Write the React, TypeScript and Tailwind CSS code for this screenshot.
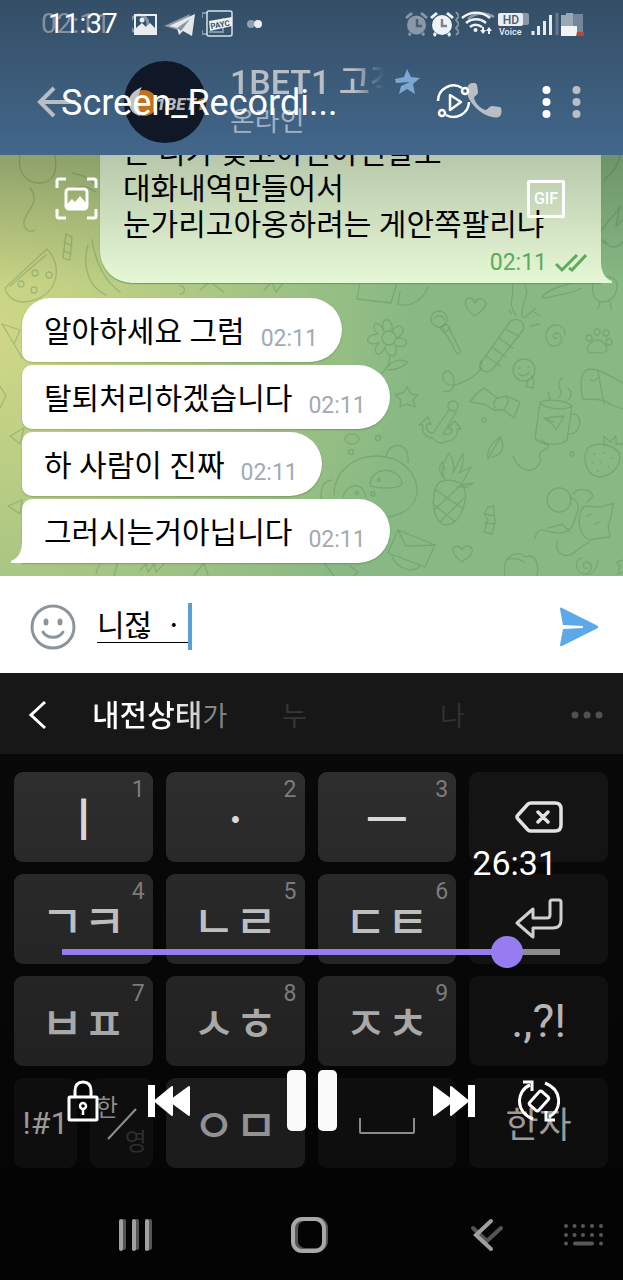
import { useState } from "react";
import type { ReactNode } from "react";
import clsx from "clsx";

type KeyDef = { label: ReactNode; name: string; hint?: string; dim?: boolean };

const messages = ["알아하세요 그럼", "탈퇴처리하겠습니다", "하 사람이 진짜", "그러시는거아닙니다"];

function Dots({ className }: { className: string }) {
    return (
        <svg width="9" height="32" viewBox="0 0 9 32" className={className} fill="currentColor">
            <circle cx="4.500" cy="4" r="4" />
            <circle cx="4.500" cy="16" r="4" />
            <circle cx="4.500" cy="28" r="4" />
        </svg>
    );
}

function Alarms() {
    return (
        <svg width="56" height="28" viewBox="403 9 56 28">
            <g fill="#8a97a4">
                <circle cx="416.500" cy="24" r="9.500" />
                <path d="M405 16l6-5 2 2-6 5zM428 16l-6-5-2 2 6 5zM409 31l3 2-2 2-2-1zM424 31l-3 2 2 2 2-1z" />
            </g>
            <path d="M417 18v7h5" stroke="#4b5f73" strokeWidth="2.500" fill="none" />
            <path d="M456 11l3 4-3 4 3 4-3 4 3 4-3 3" stroke="#8494a3" strokeWidth="2" fill="none" />
            <g fill="#eef2f5">
                <circle cx="442" cy="24" r="10" />
                <path d="M430 16l6-5 2 2-6 5zM454 16l-6-5-2 2 6 5zM434 31l3 2-2 3-2-2zM450 31l-3 2 2 3 2-2z" />
            </g>
            <path d="M442 18v7h5" stroke="#7d868e" strokeWidth="2.500" fill="none" />
        </svg>
    );
}

function StatusBar() {
    return (
        <div className="relative flex h-12 items-center justify-between pl-12 pr-[38px]">
            <span className="absolute left-[41px] text-[28px] leading-12 text-[#94a2af] opacity-80">02:11</span>
            <span className="relative text-[28px] leading-12 text-white">11:37</span>
            <div className="ml-[14px] mr-auto flex items-center gap-[5px]">
                <svg width="26" height="26" viewBox="131 10 26 26">
                    <circle cx="138" cy="23" r="9" fill="none" stroke="#8796a4" strokeWidth="3" />
                    <path d="M134 14h21v19h-21z" fill="none" stroke="#e8edf0" strokeWidth="2" />
                    <path d="M135 32v-5l6-5 4 4 4-4 6 6v4z" fill="#e8edf0" />
                    <circle cx="141" cy="19" r="2.500" fill="#e8edf0" />
                </svg>
                <svg width="34" height="26" viewBox="162 10 34 26">
                    <path d="M163 25l26-12-4 17-8-1z" fill="#8b98a5" />
                    <path d="M168 25l26-12-3 22-9-5-4 4-2-7z" fill="#e4e8eb" />
                    <path d="M176 27l13-9-9 12z" fill="#8896a4" />
                </svg>
                <svg width="32" height="28" viewBox="201 9 32 28">
                    <path d="M201 17v-5h5M201 29v4h5" fill="none" stroke="#8495a4" strokeWidth="2" />
                    <path d="M222 17v14h-14" fill="none" stroke="#8495a4" strokeWidth="2" />
                    <rect x="206" y="10" width="25" height="25" rx="2" fill="none" stroke="#d9e1e8" strokeWidth="1.500" />
                    <path d="M208 20l23-4v9l-22 5z" fill="#eef2f5" />
                    <text x="210" y="28" fontSize="8" fontWeight="700" fill="#3c566f" transform="rotate(-10 210 28)">PAYC</text>
                </svg>
                <svg width="24" height="12" viewBox="-6 0 24 12">
                    <circle cx="6" cy="6" r="4" fill="#8fa0ae" />
                    <circle cx="13" cy="6" r="4" fill="#e8edf0" />
                </svg>
            </div>
            <div className="flex items-center gap-[2px]">
                <Alarms />
                <svg width="34" height="28" viewBox="461 9 34 28" fill="none" stroke="#eef2f5" strokeWidth="2.500">
                    <path d="M468 18c8-7 18-7 26-2" stroke="#8b9bab" />
                    <path d="M462 17c8-7 20-7 28 0M466 22c6-5 14-5 20 0M470 26c3-3 8-3 12 0" />
                    <circle cx="475.500" cy="29" r="2" fill="#eef2f5" stroke="none" />
                    <path d="M483 26v6M489 33v-6" strokeWidth="2" />
                    <path d="M480 29l3 4 3-4zM486 30l3-4 3 4z" fill="#eef2f5" stroke="none" />
                </svg>
                <svg width="32" height="28" viewBox="498 9 32 28">
                    <rect x="506" y="12" width="24" height="12" rx="2" fill="#8b98a5" />
                    <rect x="499" y="12" width="25" height="13" rx="2" fill="#e9edf0" />
                    <text x="512" y="23" textAnchor="middle" fontSize="12" fontWeight="500" fill="#4a5c6d">HD</text>
                    <text x="500" y="34" fontSize="9" fontWeight="500" fill="#e9edf0">Voice</text>
                </svg>
                <svg width="28" height="28" viewBox="531 9 28 28" strokeWidth="3" stroke="#e6ebef">
                    <path d="M533 34v-4M538.500 34v-9M544.500 34v-14M550.500 34v-20" />
                    <path d="M557 34v-22" stroke="#64798d" />
                </svg>
                <svg width="24" height="28" viewBox="560 9 24 28">
                    <path d="M560 14h5v-2h7v2h4v11h-16z" fill="#9aa8b5" />
                    <path d="M572 13h10v18h-10z" fill="#73869a" />
                    <path d="M560 25h16v10h-16z" fill="#f1f3f5" />
                    <path d="M576 31h7v4h-8z" fill="#b24a40" />
                </svg>
            </div>
        </div>
    );
}

function ChatHeader() {
    return (
        <header className="bg-linear-to-b from-[#344e66] to-[#42678b]">
            <StatusBar />
            <div className="flex h-[107px] items-center pl-[37px] pr-[42px] text-[#b9bec4]">
                <button aria-label="Back">
                    <svg width="40" height="32" viewBox="0 0 40 32" fill="none" stroke="currentColor" strokeWidth="4">
                        <path d="M17 2L3 16l14 14M3 16h36" />
                    </svg>
                </button>
                <svg width="82" height="82" viewBox="124 61 82 82" className="ml-[47px] shrink-0">
                    <circle cx="165" cy="102" r="41" fill="#101828" />
                    <circle cx="144" cy="103" r="13" fill="#c4731b" />
                    <path d="M142 87c-9 4-14 9-13 17 1 7 5 10 11 12 0-10-5-17 2-29z" fill="#bfc2c6" />
                    <text x="156" y="110" fontSize="17" fontWeight="900" fontStyle="italic" fill="#b5b8bd">
                        1BET<tspan fill="#c4731b">1</tspan>
                    </text>
                </svg>
                <div className="ml-6 min-w-0 flex-1">
                    <div className="flex items-center gap-[10px]">
                        <h1 className="w-[154px] overflow-hidden whitespace-nowrap text-[34px] leading-10 font-medium mask-r-from-80% mask-r-to-100%">
                            1BET1 고객
                        </h1>
                        <svg width="26" height="26" viewBox="0 0 26 26" fill="#7da7d0">
                            <path d="M13 0l4 8 9 1-7 6 2 10-8-5-8 5 2-8 9-4-14 1-1-4 9-2z" />
                        </svg>
                    </div>
                    <p className="text-[27px] leading-10 text-[#9fb2c4]">온라인</p>
                </div>
                <button aria-label="Call">
                    <svg width="38" height="38" viewBox="2 2 38 38" fill="currentColor">
                        <path d="M3 5c2-4 8-4 9-1l1 7c0 3-4 4-4 6 1 5 6 10 11 12 3 0 4-4 7-4l8 1c2 1 2 7 0 9-3 3-9 1-14-1C10 29-2 14 3 5z" />
                    </svg>
                </button>
                <button aria-label="More" className="ml-[67px]">
                    <Dots className="block" />
                </button>
            </div>
        </header>
    );
}

// Line-art wallpaper behind the messages
function Doodles() {
    return (
        <svg
            className="absolute inset-0 size-full"
            viewBox="0 155 623 421"
            preserveAspectRatio="xMidYMid slice"
            fill="none"
            stroke="#4d7d4a"
            strokeOpacity="0.300"
            strokeWidth="1.300"
            strokeLinecap="round"
            strokeLinejoin="round"
        >
            {/* watermelon, candy, carrot, balloon on the left */}
            <path d="M5 288L47 249c18 18 10 52-24 53-8 0-16-5-18-14zM10 286l36-31" />
            <circle cx="21" cy="284" r="3" />
            <circle cx="34" cy="290" r="3" />
            <circle cx="49" cy="275" r="3" />
            <circle cx="35" cy="273" r="3" />
            <path d="M66 234l6 3-2 23-7-2zM64 242l8 4M63 250l8 4M20 155c-3 20 8 28 20 28s18-10 15-28M30 188c10 12 0 20-5 30-4 10 4 16 10 12M88 245c-6 20 0 42 18 50M92 240c4 24 12 40 28 52" />
            <path d="M2 324l18 6-6 14zM14 344l8 14M0 386l6 10-6 12M10 436l14-8-4 16zM8 506l14-6-2 14z" />
            <path d="M72 173c8 2 20 4 24 14M70 190c10-6 18-4 26 2" />
            <path d="M96 574c2-14 14-18 22-12l-4 14M140 570l6-6 2 8 6-8 2 8 8-8M194 575l10-12 4 12M264 290l8-8 4 10 8-10M180 286c6 0 6 8 0 8M200 290l10-8 14 10" />
            {/* right of the top bubble */}
            <path d="M604 180c10-8 16-16 16-26M600 234c6-14 14-16 20-28l-4 20 7-6M604 240c6 10 14 8 19 2M606 226c-8 4-8 14 0 18M593 284c4-10 22-10 24 0 1 10-6 18-14 18s-12-8-10-18zM600 302l-2 7M610 302l1 7" />
            {/* envelope and top doodles */}
            <path d="M360 283l-3 16 34 4 6-20M398 304c12 4 26-4 30-18M398 304l2-12M512 283c4 12-6 20 4 32M524 283c8 12-4 18-2 34M542 297c10-12 34-14 38-14M546 298c10-4 20-2 36-10M542 297l4 1" />
            <path d="M475 316c-12-9-11-17-6-18 5 0 5 4 6 5 1-4 6-6 10-2 4 6-6 11-10 15z" />
            <circle cx="439" cy="319" r="8" />
            <path d="M434 319c4-6 10-3 10 1M443 328l14 26 4-2-13-26M440 328l6-4 4 4-6 5z" />
            {/* flower */}
            <circle cx="389" cy="338" r="7" />
            <path d="M384 331c-6-14 10-16 8 0 8-12 18 0 5 7 16 0 10 13-2 7 6 12-8 16-10 2-4 13-16 6-6-4-15 4-15-9-1-9-10-8 0-17 6-3zM390 356c0 10-6 16-14 22M388 366c8-8 16-6 20-4-6 6-12 8-20 8" />
            {/* candle */}
            <path d="M480 364l30-42c6-6 16 0 13 8l-31 40c-6 4-14 0-12-6zM486 356l14 10M492 347l14 10M499 338l14 10M506 329l14 8M511 314l-2-4M524 318l12-10M530 326l10-2M534 312l6 4" />
            <path d="M557 338c-3 2-6-4-1-5 7 0 8 10 0 13-12 2-14-18-2-21 6-1 12 4 11 10" />
            <path d="M592 342c5-5 12 0 14 4 4 8-6 8-10 6-8 4-12-4-4-10z" />
            <circle cx="589" cy="338" r="3" />
            <circle cx="597" cy="332" r="3" />
            <circle cx="606" cy="333" r="3" />
            <circle cx="609" cy="342" r="3" />
            <path d="M444 391c14 4 12-20 3-20-8 2-4 16 8 14 14-4 30-14 26-24" />
            <circle cx="524" cy="370" r="11" />
            <path d="M519 368h1M528 367h1M519 374c4 3 8 2 10-2M528 380l-2 6 7 2 1-7-3-5M583 399c-4-16-2-30 8-30 10 0 24 10 32 14M583 399c12 0 22 0 28 6l12 4M590 380c4 2 6 0 8-2M598 372l6 32" />
            {/* star, anchor, bow */}
            <path d="M407 387l4 7 7 1-5 5 2 7-8-3-7 3 1-7-6-5 8-2z" />
            <circle cx="453" cy="406" r="5" />
            <path d="M449 410l-16 23c-5 0-8-4-6-9l4 0-3-7-9 8 4 0c-2 8 4 13 10 13 4 6 10 6 14 3 8 0 12-8 10-12l4 0-6-8-7 7 4 1c0 5-4 6-9 5l13-22" />
            <path d="M484 388l13 10 10-2 13 6-6 16-10-8-10 0-10-6-14-2 6-8zM497 398c-4 4-4 8-1 10M507 398c2 4 0 8-3 11" />
            {/* mug */}
            <path d="M540 403l-5 35c6 8 26 8 32 2l5-34c-6-6-26-8-32-3zM540 403c6 6 26 8 32 3M571 414c14-2 10 22-3 20M544 418l20-2-8 14-4-6zM544 418l10 4M550 400l-2-8M558 398c10-8-6-10 4-20M568 400c4-4 4-8 0-12" />
            <circle cx="484" cy="420" r="2" />
            <circle cx="572" cy="454" r="2" />
            <path d="M488 459c-2-10 6-18 12-22 6 10 2 18-8 20M488 459l10-18M497 443l4-6" />
            {/* strawberry */}
            <path d="M589 447c10-6 24-2 30 6 4 12-8 24-20 24-14-2-18-22-10-30zM604 446l0-10 6 6 6-6 0 8 7 0M594 454h1M603 453h1M611 458h1M592 463h1M600 462h1M608 467h1M597 471h1" />
            {/* panda */}
            <path d="M334 495c0-24 20-39 42-39 26 0 42 18 41 36-2 16-14 22-28 25M386 456c4-16 24-14 22 6M332 480c-14 2-12 18-8 24M373 476c8-10 28-6 29 8-4 6-24 4-31 2-2-2 0-8 2-10zM343 497c4-14 20-16 23 0" />
            <circle cx="379" cy="480" r="1.500" />
            <circle cx="357" cy="493" r="1.500" />
            <circle cx="373" cy="494" r="2" />
            <ellipse cx="352" cy="439" rx="7" ry="5" />
            <circle cx="378" cy="438" r="2.500" />
            <circle cx="351" cy="452" r="2.500" />
            {/* pineapple */}
            <path d="M443 481c-12 0-14 40 2 44 16 0 24-26 19-38-4-6-14-8-21-6zM436 490l26 18M432 503l22 18M462 484l-28 26M464 498l-24 24M445 481c-6-14 0-20 4-28 4 6 6 14 4 18M453 473l10-20c0 10 0 14-4 20l12-6-10 18 12-2-6 4-10 0M445 470l-3-8c-4 6-2 12 2 16" />
            <path d="M488 507l6-1 0 6 1 10-3 12-8-2 4-12-4-6zM486 514l8 2M485 523l10 1" />
            {/* cat */}
            <path d="M541 460c-8-14 20-8 0-20 M541 460c-6 16-22 12-28-4 -4-4 M521 486c0-8-12-14-12-28 2-8 14-8 32-5M510 458c0 8 6 20 12 26-8 12-8 28 0 38 14 14 36 24 54 20M541 476c6-6 6-10 18-6 6 0 0 8-6 8M520 500c-4 18 6 30 18 28M522 502l18 10M540 510c8 8 0 12-6 6" />
            <circle cx="559" cy="500" r="12" />
            <path d="M571 498c10 4 8 12 4 20-2 10-8 18-24 14-10-4-14-2-16 6M573 494c6-8 18-4 20 2l-6 6M584 506c-8 10-6 30 6 34l10-2 10-1-2-12c6-10 2-14 6-22l-14 4zM586 516l6-2M594 524l6-2M557 542c-2 16 14 16 20 8l12-8M548 528l14-4 8 8" />
            {/* bottom row */}
            <path d="M398 530l37 15-10 22-37-14zM398 530l8 16 29-1M392 556c4 12 20 18 28 10M462 562c-12-9-10-15-5-16 3 0 4 3 5 4 2-5 8-5 10-1 2 6-6 9-10 13zM505 575c-4-20 14-26 20-18 12-4 14 10 12 18M506 560c6-2 12-2 18 2M588 568c-4 2-8-4-2-6 6 0 8 8 0 12-12 0-12-16-4-16M598 560c0 6-4 14-10 14M623 560l-7 2 4 4-2 8 5-2M322 560l12 16M350 566l8 6-4 4" />
        </svg>
    );
}

function Chat() {
    return (
        <main className="relative overflow-hidden bg-[#88b984] bg-[radial-gradient(ellipse_410px_430px_at_0px_180px,#cfd787_0%,#c2d184_20%,#9ec283_70%,#88b984_100%)] pb-[13px]">
            <Doodles />
            <div className="relative -mt-5 ml-[100px] mr-[22px] rounded-bl-[32px] bg-[#e6f9d6] pl-[23px] pr-[14px] shadow-[0_1px_1px_#6b9a64]">
                <p className="text-[30px] leading-9 text-black">
                    는 니가 늦고아닌아닌말로
                    <br />
                    대화내역만들어서
                    <br />
                    <span className="whitespace-nowrap">눈가리고아옹하려는 게안쪽팔리냐</span>
                </p>
                <div className="flex h-10 items-center justify-end gap-2 text-[23px] text-[#61b061]">
                    <time>02:11</time>
                    <svg width="32" height="20" viewBox="0 0 32 20" fill="none" stroke="currentColor" strokeWidth="3">
                        <path d="M1 11l6 6L22 2M14 15l3 2L31 2" />
                    </svg>
                </div>
                <svg width="12" height="22" viewBox="0 0 12 22" className="absolute -right-[11px] bottom-0" fill="#e6f9d6">
                    <path d="M0 0h1c0 10 3 17 11 20v2H0z" />
                </svg>
            </div>
            <div className="absolute inset-x-0 top-0 h-[130px] bg-linear-to-b from-black/20 to-transparent" />
            <ul className="relative mt-[15px] flex flex-col items-start gap-[3px] pl-[22px]">
                {messages.map((text, i) => {
                    const last = i === messages.length - 1;
                    return (
                        <li
                            key={text}
                            className={clsx(
                                "relative flex h-16 items-center gap-4 rounded-r-[32px] bg-white pl-[22px] pr-6 shadow-[0_1px_2px_#0003]",
                                i === 0 ? "rounded-tl-[28px]" : "rounded-tl-[10px]",
                                !last && "rounded-bl-[10px]"
                            )}
                        >
                            <span className="pt-[3px] text-[30px] leading-9 text-black">{text}</span>
                            <time className="pt-[18px] text-[23px] leading-8 text-[#a1aab3]">02:11</time>
                            {last && (
                                <svg width="12" height="22" viewBox="0 0 12 22" className="absolute -left-[11px] bottom-0" fill="#fff">
                                    <path d="M12 0h-1c0 10-3 17-11 20v2h12z" />
                                </svg>
                            )}
                        </li>
                    );
                })}
            </ul>
        </main>
    );
}

function Composer() {
    const [draft, setDraft] = useState("니젆 ㆍ");
    return (
        <form className="flex h-[97px] items-center bg-white pt-1 pl-[30px] pr-6" onSubmit={(e) => e.preventDefault()}>
            <button type="button" aria-label="Emoji">
                <svg width="46" height="46" viewBox="0 0 46 46" fill="none" stroke="#8c959b" strokeWidth="3">
                    <circle cx="23" cy="23" r="21" />
                    <path d="M13 28c4 7 16 7 20 0" strokeLinecap="round" />
                    <g fill="#8c959b" stroke="none">
                        <ellipse cx="16" cy="18" rx="2.500" ry="3.500" />
                        <ellipse cx="30" cy="18" rx="2.500" ry="3.500" />
                    </g>
                </svg>
            </button>
            <input
                aria-label="Message"
                value={draft}
                onChange={(e) => setDraft(e.target.value)}
                className="ml-[21px] h-8 w-[91px] border-b border-black text-[30px] leading-8 text-black outline-none"
            />
            <span className="h-[47px] w-1 bg-[#5a9fd6]" />
            <button type="submit" aria-label="Send" className="ml-auto">
                <svg width="40" height="40" viewBox="0 0 40 40" fill="#5ba9e8">
                    <path d="M1 2c0-1 1-2 2-1l36 18v2L3 39c-1 0-2 0-2-1l3-16 20-1v-2L4 18z" />
                </svg>
            </button>
        </form>
    );
}

function Suggestions() {
    return (
        <div className="flex h-[81px] items-center bg-[#171717] pt-[2px] pl-7 pr-5">
            <button aria-label="Back" className="text-white">
                <svg width="20" height="30" viewBox="0 0 20 30" fill="none" stroke="currentColor" strokeWidth="3">
                    <path d="M17 2L3 15l14 13" />
                </svg>
            </button>
            <div className="ml-11 grid flex-1 grid-cols-[190px_158px_1fr] items-center pt-1 text-[27px] leading-10">
                <button className="text-left text-[#858585]">
                    <span className="bg-linear-to-r from-white from-70% to-[#c4c4c4] bg-clip-text text-[30px] font-medium text-transparent">내전상태</span>가
                </button>
                <button className="text-left text-[#363636]">누</button>
                <button className="text-left text-[#303030]">나</button>
            </div>
            <button aria-label="More suggestions">
                <svg width="32" height="8" viewBox="0 0 32 8" fill="#505050">
                    <circle cx="4" cy="4" r="3.500" />
                    <circle cx="16" cy="4" r="3.500" />
                    <circle cx="28" cy="4" r="3.500" />
                </svg>
            </button>
        </div>
    );
}

const backspace = (
    <svg width="48" height="32" viewBox="0 0 48 32" fill="none" stroke="currentColor" strokeWidth="3.500" strokeLinejoin="round" strokeLinecap="round">
        <path d="M16 2h24q6 0 6 6v16q0 6-6 6H16q-2 0-3-1L3 18q-2-2 0-4L13 3q1-1 3-1zM23 11l10 10M33 11L23 21" />
    </svg>
);

const enter = (
    <svg width="48" height="42" viewBox="0 0 48 42" fill="none" stroke="currentColor" strokeWidth="3" strokeLinejoin="round">
        <path d="M2 25L18 11v9h14q3 0 3-3V4q0-2 2-2h7q2 0 2 2v18q0 8-8 8H18v9z" />
    </svg>
);

const spaceBar = (
    <svg width="56" height="16" viewBox="0 0 56 16" fill="none" stroke="currentColor" strokeWidth="2">
        <path d="M1 0v14q0 1 1 1h52q1 0 1-1V0" />
    </svg>
);

const rows: { keyTone: string; dimTone: string; keys: KeyDef[] }[] = [
    {
        keyTone: "bg-linear-to-b from-[#2e2e2e] to-[#292929] text-[#d8d8d8]",
        dimTone: "bg-[#141414] text-[#e2e2e2]",
        keys: [
            { label: "ㅣ", name: "i", hint: "1" },
            { label: "ㆍ", name: "dot", hint: "2" },
            { label: "ㅡ", name: "eu", hint: "3" },
            { label: backspace, name: "Backspace", dim: true },
        ],
    },
    {
        keyTone: "bg-linear-to-b from-[#292929] to-[#252525] text-[#bebebe]",
        dimTone: "bg-[#121212] text-[#cfcfcf]",
        keys: [
            { label: "ㄱㅋ", name: "giyeok", hint: "4" },
            { label: "ㄴㄹ", name: "nieun", hint: "5" },
            { label: "ㄷㅌ", name: "digeut", hint: "6" },
            { label: enter, name: "Enter", dim: true },
        ],
    },
    {
        keyTone: "bg-linear-to-b from-[#252525] to-[#212121] text-[#a8a8a8]",
        dimTone: "bg-[#101010] text-[#b5b5b5]",
        keys: [
            { label: "ㅂㅍ", name: "bieup", hint: "7" },
            { label: "ㅅㅎ", name: "siot", hint: "8" },
            { label: "ㅈㅊ", name: "jieut", hint: "9" },
            { label: ".,?!", name: "Punctuation", dim: true },
        ],
    },
];

function Keyboard() {
    return (
        <section className="grid grid-cols-4 gap-x-[13px] gap-y-3 bg-linear-to-b from-[#090909] to-[#050505] pt-[18px] pl-[14px] pr-[15px]">
            {rows.map((row) =>
                row.keys.map((k) => (
                    <button
                        key={k.name}
                        aria-label={k.name}
                        className={clsx(
                            "relative flex h-[90px] items-center justify-center rounded-[9px] text-[46px]",
                            k.dim ? row.dimTone : [row.keyTone, "pt-[6px] font-medium"]
                        )}
                    >
                        {k.label}
                        {k.hint && <span className="absolute top-1 right-2 text-[23px] leading-7 font-normal text-[#7c7c7c]">{k.hint}</span>}
                    </button>
                ))
            )}
            <div className="grid grid-cols-2 gap-x-[13px]">
                <button className="h-[90px] rounded-[9px] bg-[#0e0e0e] text-[32px] text-[#9a9a9a]">!#1</button>
                <button className="relative h-[90px] rounded-[9px] bg-[#0e0e0e] text-2xl text-[#8a8a8a]">
                    <span className="absolute top-[14px] left-[6px] leading-8">한</span>
                    <svg width="30" height="32" viewBox="0 0 30 32" className="absolute top-[30px] left-[17px]" stroke="#8f8f8f" strokeWidth="2">
                        <path d="M1 31L29 1" />
                    </svg>
                    <span className="absolute right-[6px] bottom-[10px] leading-8 text-[#2e2e2e]">영</span>
                </button>
            </div>
            <button className="h-[90px] rounded-[9px] bg-[#1c1c1c] pt-[6px] text-[46px] font-medium text-[#929292]">ㅇㅁ</button>
            <button aria-label="Space" className="flex h-[90px] items-center justify-center rounded-[9px] bg-[#0e0e0e] pt-[6px] text-[#8a8a8a]">
                {spaceBar}
            </button>
            <button className="h-[90px] rounded-[9px] bg-[#0e0e0e] pt-[6px] text-[36px] text-[#9a9a9a]">한자</button>
        </section>
    );
}

function NavBar() {
    return (
        <nav className="flex h-28 items-center justify-between bg-[#040404] pt-[22px] pl-[118px] pr-5">
            <div className="flex items-center gap-[138px]">
                <button aria-label="Recents">
                    <svg width="35" height="34" viewBox="0 0 35 34" strokeWidth="4" strokeLinecap="round">
                        <path d="M6 3v27M19 3v27M32 3v27" stroke="#555" />
                        <path d="M3 3v28M16 3v28M29 3v28" stroke="#a0a0a0" />
                    </svg>
                </button>
                <button aria-label="Home">
                    <svg width="38" height="36" viewBox="0 0 38 36" fill="none" strokeWidth="4">
                        <rect x="5" y="2" width="30" height="31" rx="9" stroke="#555" />
                        <rect x="2" y="2" width="31" height="32" rx="9" stroke="#a8a8a8" />
                    </svg>
                </button>
            </div>
            <div className="flex items-center gap-[60px]">
                <button aria-label="Back">
                    <svg width="34" height="34" viewBox="0 0 34 34" fill="none" strokeWidth="4" strokeLinecap="round">
                        <path d="M3 10l14 13L31 10" stroke="#555" />
                        <path d="M21 3L6 17l15 14" stroke="#a0a0a0" />
                    </svg>
                </button>
                <button aria-label="Hide keyboard">
                    <svg width="39" height="22" viewBox="0 0 39 22" stroke="#585858" strokeWidth="4" strokeLinecap="round">
                        <path d="M2 2h0M10.500 2h0M19 2h0M28 2h0M37 2h0M2 11h0M10.500 11h0M19 11h0M28 11h0M37 11h0M2 19.500h0M11 19.500h17M37 19.500h0" />
                    </svg>
                </button>
            </div>
        </nav>
    );
}

// Video player controls laid over the recording
function PlayerOverlay() {
    const [progress, setProgress] = useState(92);
    return (
        <div className="absolute inset-0 flex flex-col pt-12 text-white">
            <div className="flex h-[107px] items-center pl-[61px] pr-[72px]">
                <h2 className="pt-[2px] text-[36px] leading-10">Screen_Recordi...</h2>
                <button aria-label="Motion" className="ml-auto">
                    <svg width="36" height="36" viewBox="0 0 36 36" fill="none" stroke="currentColor" strokeWidth="2.500">
                        <path d="M26 4A15.500 15.500 0 0 0 2 17M10 31A15.500 15.500 0 0 0 33 18" />
                        <circle cx="29" cy="7" r="3" />
                        <circle cx="6" cy="29" r="3" />
                        <path d="M14 11v15l11-8z" strokeLinejoin="round" />
                    </svg>
                </button>
                <button aria-label="Player menu" className="ml-[70px]">
                    <Dots className="block" />
                </button>
            </div>
            <div className="mt-[22px] flex items-center justify-between pl-[55px] pr-[58px]">
                <button aria-label="Capture">
                    <svg width="43" height="43" viewBox="0 0 43 43" fill="none" stroke="currentColor" strokeWidth="3">
                        <path d="M2 11V4q0-2 2-2h7M32 2h7q2 0 2 2v7M41 32v7q0 2-2 2h-7M11 41H4q-2 0-2-2v-7" />
                        <rect x="11" y="12" width="21" height="20" rx="3" />
                        <path d="M12 31v-4l5-5 3 3 5-6 6 7v5z" fill="currentColor" stroke="none" />
                    </svg>
                </button>
                <button className="h-[38px] w-[38px] rounded-[2px] border-3 border-white text-base font-medium">GIF</button>
            </div>
            <div className="mt-auto pb-[149px]">
                <p className="pr-[66px] text-right text-[34px] leading-10">26:31</p>
                <div className="mt-[53px] flex h-8 items-center pl-[62px] pr-[63px]">
                    <input
                        type="range"
                        aria-label="Position"
                        value={progress}
                        onChange={(e) => setProgress(Number(e.target.value))}
                        className="h-[6px] w-full appearance-none bg-linear-to-r from-[#967cf0] from-90% to-[#8c8c8c] to-90% [&::-webkit-slider-thumb]:size-8 [&::-webkit-slider-thumb]:appearance-none [&::-webkit-slider-thumb]:rounded-full [&::-webkit-slider-thumb]:bg-[#967cf0]"
                    />
                </div>
                <div className="mt-[102px] flex items-center justify-between pl-[66px] pr-[63px]">
                    <div className="flex items-center gap-[47px]">
                        <button aria-label="Lock">
                            <svg width="34" height="42" viewBox="0 0 34 42" fill="none" stroke="currentColor" strokeWidth="3">
                                <rect x="3" y="17" width="28" height="23" rx="1" />
                                <path d="M9 17v-6q0-9 8-9t8 9v6" />
                                <circle cx="17" cy="26" r="3" strokeWidth="2.500" />
                                <path d="M17 29v6" strokeWidth="2.500" />
                            </svg>
                        </button>
                        <button aria-label="Previous">
                            <svg width="44" height="34" viewBox="0 0 44 34" fill="currentColor" stroke="currentColor" strokeLinejoin="round">
                                <path d="M1 1h7v32H1z" stroke="none" />
                                <path d="M8 17L25 3v28zM23 17L42 3v28z" strokeWidth="2" />
                            </svg>
                        </button>
                    </div>
                    <button aria-label="Pause" className="flex gap-3">
                        <span className="h-[61px] w-[19px] rounded-[5px] bg-[#fafafa]" />
                        <span className="h-[61px] w-[19px] rounded-[5px] bg-[#fafafa]" />
                    </button>
                    <div className="flex items-center gap-[42px]">
                        <button aria-label="Next">
                            <svg width="44" height="34" viewBox="0 0 44 34" fill="currentColor" stroke="currentColor" strokeLinejoin="round">
                                <path d="M36 1h7v32h-7z" stroke="none" />
                                <path d="M36 17L19 3v28zM21 17L2 3v28z" strokeWidth="2" />
                            </svg>
                        </button>
                        <button aria-label="Rotate">
                            <svg width="42" height="42" viewBox="0 0 42 42" fill="none" stroke="currentColor" strokeWidth="3">
                                <path d="M15 39C-3 32-2 11 12 5M27 3C45 10 44 30 31 37" />
                                <path d="M5 2h9v9M37 40h-9v-9" />
                                <rect x="15" y="12" width="12" height="18" rx="2" transform="rotate(42 21 21)" />
                            </svg>
                        </button>
                    </div>
                </div>
            </div>
        </div>
    );
}

export default function App() {
    return (
        <div className="relative overflow-hidden bg-black font-['Roboto','Noto_Sans_CJK_KR',sans-serif]">
            <ChatHeader />
            <Chat />
            <Composer />
            <Suggestions />
            <Keyboard />
            <NavBar />
            <PlayerOverlay />
        </div>
    );
}
